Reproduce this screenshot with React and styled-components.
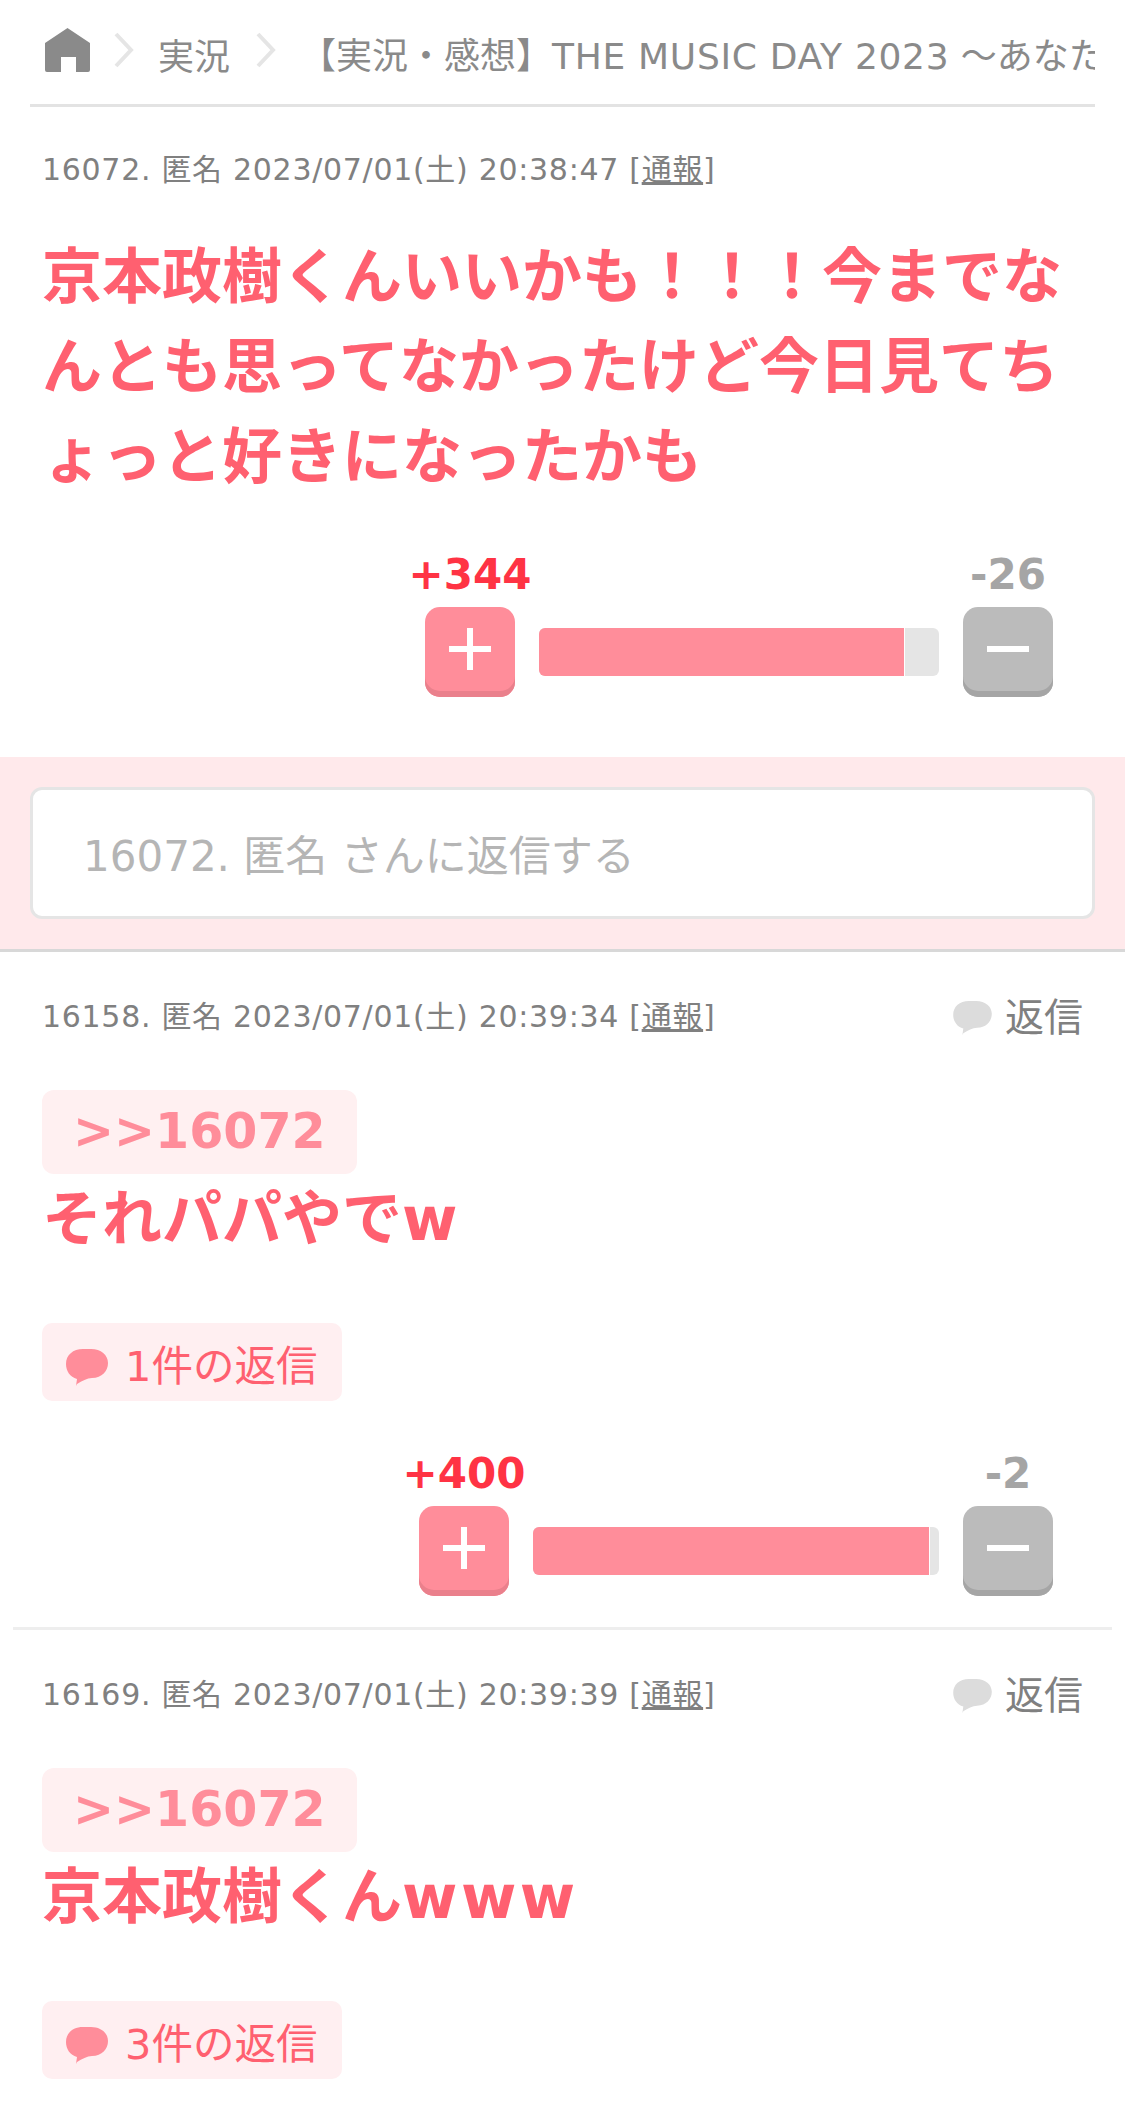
import React from 'react'
import styled, { createGlobalStyle } from 'styled-components'

const posts = [
  {
    id: 16158,
    time: '2023/07/01(土) 20:39:34',
    anchor: '>>16072',
    body: 'それパパやで',
    tail: 'w',
    replies: 1,
    plus: 400,
    minus: 2,
    barWidth: 406,
    pct: 97.8,
    divider: true,
  },
  {
    id: 16169,
    time: '2023/07/01(土) 20:39:39',
    anchor: '>>16072',
    body: '京本政樹くん',
    tail: 'www',
    replies: 3,
  },
]

function Bubble({ color, size }) {
  return (
    <BubbleSvg $size={size} viewBox="0 0 42 37">
      <path
        fill={color}
        d="M17 0h8c10 0 17 6 17 14s-6 15-16 15c-5 0-10 3-15 6l-1 2 1-7C4 28 0 22 0 15 0 6 7 0 17 0z"
      />
    </BubbleSvg>
  )
}

function Chevron() {
  return (
    <ChevronSvg viewBox="0 0 22 36">
      <path d="M3 2l15 16L3 34" fill="none" stroke="#e5e5e5" strokeWidth="4" />
    </ChevronSvg>
  )
}

function Votes({ plus, minus, barWidth, pct }) {
  return (
    <VoteBlock $barWidth={barWidth}>
      <PlusCount>+{plus}</PlusCount>
      <span />
      <MinusCount>-{minus}</MinusCount>
      <VoteButton $tone="plus">
        <Glyph viewBox="0 0 42 42">
          <path d="M18 0h6v18h18v6H24v18h-6V24H0v-6h18z" fill="#fff" />
        </Glyph>
      </VoteButton>
      <Bar>
        <BarFill $pct={pct} />
      </Bar>
      <VoteButton $tone="minus">
        <Glyph viewBox="0 0 42 42">
          <path d="M0 18h42v6H0z" fill="#fff" />
        </Glyph>
      </VoteButton>
    </VoteBlock>
  )
}

function Meta({ id, time }) {
  return (
    <MetaText>
      {id}. 匿名 {time} [<ReportLink>通報</ReportLink>]
    </MetaText>
  )
}

function App() {
  return (
    <Page>
      <GlobalStyle />
      <Breadcrumb>
        <HomeIcon viewBox="0 0 45 44">
          <path
            fill="#8a8a8a"
            d="M22.5 0L45 15v27a2 2 0 0 1-2 2H31V29H16v15H2a2 2 0 0 1-2-2V15z"
          />
        </HomeIcon>
        <Chevron />
        <Crumb>実況</Crumb>
        <Chevron />
        <CrumbTitle>
          【実況・感想】<TitleLatin>THE MUSIC DAY 2023</TitleLatin> 〜あなた
        </CrumbTitle>
      </Breadcrumb>

      <TopPost>
        <Meta id={16072} time="2023/07/01(土) 20:38:47" />
        <LeadBody>京本政樹くんいいかも！！！今までなんとも思ってなかったけど今日見てちょっと好きになったかも</LeadBody>
        <Votes plus={344} minus={26} barWidth={400} pct={91.5} />
      </TopPost>

      <ReplyBand>
        <ReplyInput>16072. 匿名 さんに返信する</ReplyInput>
      </ReplyBand>

      {posts.map((post) => (
        <Post key={post.id} $divider={post.divider}>
          <MetaRow>
            <Meta id={post.id} time={post.time} />
            <ReplyAction>
              <Bubble color="#dcdcdc" size={39} />
              返信
            </ReplyAction>
          </MetaRow>
          <Anchor>{post.anchor}</Anchor>
          <Body>
            {post.body}
            <BodyLatin>{post.tail}</BodyLatin>
          </Body>
          <ReplyCount>
            <Bubble color="#ff8d9a" size={42} />
            {post.replies}件の返信
          </ReplyCount>
          {post.plus && (
            <Votes plus={post.plus} minus={post.minus} barWidth={post.barWidth} pct={post.pct} />
          )}
        </Post>
      ))}
    </Page>
  )
}

export default App

const GlobalStyle = createGlobalStyle`
  html, body {
    margin: 0;
    padding: 0;
    background: #fff;
  }
  * {
    box-sizing: border-box;
  }
`

const Page = styled.div`
  width: 1125px;
  height: 2115px;
  overflow: hidden;
  background: #fff;
  font-family: "DejaVu Sans", "Noto Sans CJK JP", sans-serif;
`

const Breadcrumb = styled.nav`
  display: flex;
  align-items: center;
  height: 107px;
  margin: 0 30px;
  padding: 0 0 0 15px;
  border-bottom: 3px solid #e3e3e3;
  overflow: hidden;
  white-space: nowrap;
  color: #8a8a8a;
  font-size: 36px;
`

const HomeIcon = styled.svg`
  flex: none;
  width: 45px;
  height: 44px;
  margin: -4px 23px 0 0;
`

const ChevronSvg = styled.svg`
  flex: none;
  width: 22px;
  height: 36px;
  margin-top: -4px;
`

const Crumb = styled.span`
  flex: none;
  margin: 4px 25px 0 23px;
`

const CrumbTitle = styled.span`
  flex: none;
  margin: 10px 0 0 23px;
  line-height: 1;
`

const TitleLatin = styled.span`
  letter-spacing: 0.7px;
`

const TopPost = styled.section`
  padding: 43px 42px 60px;
`

const Post = styled.section`
  margin: 0 13px;
  padding: 44px 29px 31px;
  border-bottom: ${(p) => (p.$divider ? '3px solid #eeeeee' : 'none')};
`

const MetaRow = styled.div`
  display: flex;
  align-items: center;
  justify-content: space-between;
`

const MetaText = styled.div`
  height: 40px;
  line-height: 40px;
  font-size: 30px;
  letter-spacing: 0.7px;
  color: #808080;
  white-space: nowrap;
`

const ReportLink = styled.span`
  text-decoration: underline;
`

const ReplyAction = styled.div`
  display: flex;
  align-items: center;
  gap: 13px;
  padding-top: 2px;
  font-size: 39px;
  line-height: 40px;
  color: #808080;
`

const BubbleSvg = styled.svg`
  flex: none;
  width: ${(p) => p.$size}px;
  height: ${(p) => Math.round((p.$size * 37) / 42)}px;
`

const Body = styled.p`
  margin: 0 0 59px;
  font-size: 60px;
  line-height: 90px;
  font-weight: 700;
  color: #ff6070;
`

const BodyLatin = styled.span`
  letter-spacing: 3.5px;
`

const LeadBody = styled(Body)`
  margin: 42px 0 47px;
`

const Anchor = styled.div`
  display: inline-block;
  margin-top: 52px;
  padding: 0 31px;
  height: 84px;
  line-height: 84px;
  border-radius: 12px;
  background: #fff0f1;
  color: #ff8d9a;
  font-size: 49px;
  font-weight: 700;
  vertical-align: top;
`

const ReplyCount = styled.div`
  display: flex;
  align-items: center;
  gap: 17px;
  width: 300px;
  height: 78px;
  padding: 2px 0 0 24px;
  border-radius: 10px;
  background: #ffeff1;
  color: #ff6070;
  font-size: 41.5px;

  ${BubbleSvg} {
    margin-top: 8px;
  }
`

const VoteBlock = styled.div`
  display: grid;
  grid-template-columns: 90px ${(p) => p.$barWidth}px 90px;
  column-gap: 24px;
  justify-content: end;
  align-items: center;
  margin-top: 48px;
  padding-right: 30px;
`

const Count = styled.div`
  justify-self: center;
  height: 50px;
  margin-bottom: 7px;
  line-height: 50px;
  font-size: 42px;
  font-weight: 700;
  white-space: nowrap;
`

const PlusCount = styled(Count)`
  color: #ff3344;
`

const MinusCount = styled(Count)`
  color: #a5a5a5;
`

const VoteButton = styled.div`
  display: flex;
  align-items: center;
  justify-content: center;
  width: 90px;
  height: 90px;
  padding-bottom: 6px;
  border-radius: 15px;
  background: ${(p) => (p.$tone === 'plus' ? '#ff8d9a' : '#bbbbbb')};
  box-shadow: inset 0 -6px 0 ${(p) => (p.$tone === 'plus' ? '#ea808c' : '#a5a5a5')};
`

const Glyph = styled.svg`
  width: 42px;
  height: 42px;
`

const Bar = styled.div`
  height: 48px;
  border-radius: 6px;
  overflow: hidden;
  background: #e5e5e5;
`

const BarFill = styled.div`
  width: ${(p) => p.$pct}%;
  height: 100%;
  border-right: 1px solid #fff;
  background: #ff8d9a;
`

const ReplyBand = styled.div`
  padding: 30px 30px 30px;
  background: #ffe9eb;
  border-bottom: 3px solid #d8d8d8;
`

const ReplyInput = styled.div`
  height: 132px;
  padding: 4px 0 0 50px;
  line-height: 126px;
  border: 3px solid #e5e5e5;
  border-radius: 12px;
  background: #fff;
  color: #b5b5b5;
  font-size: 42px;
`
